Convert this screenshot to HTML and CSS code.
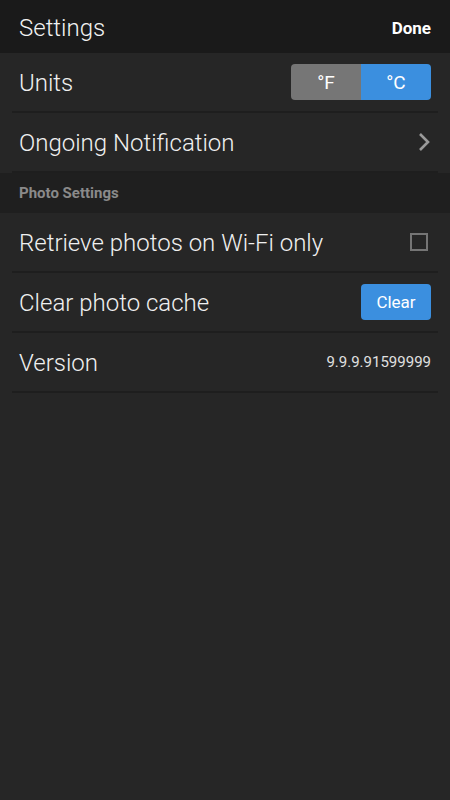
FILE: index.html
```html
<!DOCTYPE html>
<html lang="en">
<head>
    <meta charset="UTF-8">
    <meta name="viewport" content="width=device-width, initial-scale=1.0">
    <title>Settings</title>
    <link rel="stylesheet" href="styles.css">
</head>
<body>
    <div class="header">
        <div class="title">Settings</div>
        <div class="done">Done</div>
    </div>

    <div class="row">
        <div class="label">Units</div>
        <div class="units">
            <div class="unit">°F</div>
            <div class="unit active">°C</div>
        </div>
    </div>
    <div class="row">
        <div class="label">Ongoing Notification</div>
        <svg class="chevron" width="12" height="20" viewBox="0 0 12 20">
            <path d="M2 2 L10 10 L2 18" fill="none" stroke="#9a9a9a" stroke-width="2.6"/>
        </svg>
    </div>

    <div class="section">Photo Settings</div>

    <div class="row">
        <div class="label">Retrieve photos on Wi-Fi only</div>
        <div class="checkbox"></div>
    </div>
    <div class="row">
        <div class="label">Clear photo cache</div>
        <button class="clear">Clear</button>
    </div>
    <div class="row">
        <div class="label">Version</div>
        <div class="value">9.9.9.91599999</div>
    </div>
</body>
</html>
```

FILE: styles.css
```css
body {
    background-color: #262626;
    color: #ececec;
    font-family: Roboto, "Noto Sans", sans-serif;
    margin: 0;
    height: 100vh;
}

.header {
    background-color: #1a1a1a;
    height: 53px;
    display: flex;
    align-items: center;
    justify-content: space-between;
    padding: 0 19px;
}

.title {
    font-size: 24px;
    font-weight: 300;
    color: #f2f2f2;
    padding-top: 2px;
}

.done {
    font-size: 17px;
    font-weight: bold;
    color: #ffffff;
    padding-top: 2px;
}

.row {
    height: 58px;
    display: flex;
    align-items: center;
    justify-content: space-between;
    padding: 0 19px;
    position: relative;
    margin-bottom: 2px;
}

.row::after {
    content: "";
    position: absolute;
    left: 12px;
    right: 12px;
    bottom: -2px;
    height: 2px;
    background-color: #1e1e1e;
}

.label {
    font-size: 24px;
    font-weight: 300;
    color: #f0f0f0;
    padding-top: 2px;
}

.units {
    display: flex;
    width: 140px;
    height: 36px;
    border-radius: 4px;
    overflow: hidden;
}

.unit {
    flex: 1;
    display: flex;
    align-items: center;
    justify-content: center;
    font-size: 19px;
    background-color: #767676;
    color: #ffffff;
}

.unit.active {
    background-color: #3b8fdf;
}

.chevron {
    margin-right: 1px;
}

.section {
    background-color: #1f1f1f;
    height: 40px;
    display: flex;
    align-items: center;
    padding: 0 19px;
    font-size: 15px;
    font-weight: bold;
    color: #8a8a8a;
}

.checkbox {
    width: 14px;
    height: 14px;
    border: 2px solid #757575;
    margin-right: 3px;
}

.clear {
    background-color: #3b8fdf;
    color: #ffffff;
    border: none;
    border-radius: 4px;
    width: 70px;
    height: 36px;
    font-family: Roboto, sans-serif;
    font-size: 17px;
}

.value {
    font-size: 15px;
    color: #e0e0e0;
}
```
